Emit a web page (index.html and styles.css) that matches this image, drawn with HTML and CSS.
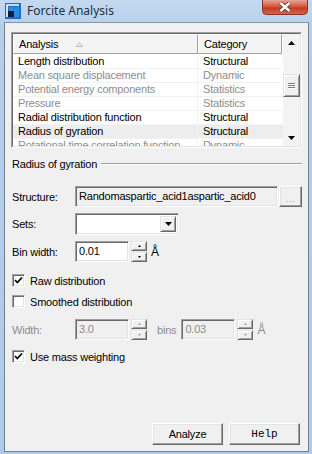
FILE: index.html
```html
<!DOCTYPE html>
<html lang="en">
<head>
    <meta charset="UTF-8">
    <meta name="viewport" content="width=device-width, initial-scale=1.0">
    <title>Forcite Analysis</title>
    <link rel="stylesheet" href="styles.css">
</head>
<body>
    <div class="window">
        <div class="titlebar">
            <svg class="app-icon" width="16" height="16" viewBox="0 0 16 16">
                <rect x="0" y="0" width="16" height="16" fill="#1d6fc4"/>
                <path d="M2 14 V2 H14" fill="none" stroke="#fff" stroke-width="1.6"/>
                <rect x="4" y="4" width="10" height="10" fill="#2f8ae0"/>
                <rect x="3" y="8" width="6" height="6" fill="#0c1d3a"/>
            </svg>
            <span class="title">Forcite Analysis</span>
            <div class="close">
                <svg width="46" height="15" viewBox="0 0 46 15">
                    <defs>
                        <linearGradient id="red" x1="0" y1="0" x2="0" y2="1">
                            <stop offset="0" stop-color="#e9a596"/>
                            <stop offset="0.45" stop-color="#d4573f"/>
                            <stop offset="0.55" stop-color="#c53b22"/>
                            <stop offset="1" stop-color="#d9674c"/>
                        </linearGradient>
                    </defs>
                    <path d="M0.5 0 V10.5 Q0.5 14.5 4.5 14.5 H41.5 Q45.5 14.5 45.5 10.5 V0" fill="url(#red)" stroke="#8a3428"/>
                    <path d="M18.5 3 L27.5 11 M27.5 3 L18.5 11" stroke="#5b2c2a" stroke-width="4"/>
                    <path d="M18.5 3 L27.5 11 M27.5 3 L18.5 11" stroke="#fff" stroke-width="2.4"/>
                </svg>
            </div>
        </div>

        <div class="client">
            <div class="listview">
                <div class="lv-inner">
                    <div class="lv-table">
                        <div class="lv-header">
                            <div class="hcell col-a">Analysis
                                <svg class="sort" width="7" height="5" viewBox="0 0 7 5"><path d="M0.5 4.5 L3.5 0.5 L6.5 4.5 Z" fill="none" stroke="#b8b8b8"/></svg>
                            </div>
                            <div class="hcell col-c">Category</div>
                        </div>
                        <div class="lv-row"><span class="col-a">Length distribution</span><span class="col-c">Structural</span></div>
                        <div class="lv-row off"><span class="col-a">Mean square displacement</span><span class="col-c">Dynamic</span></div>
                        <div class="lv-row off"><span class="col-a">Potential energy components</span><span class="col-c">Statistics</span></div>
                        <div class="lv-row off"><span class="col-a">Pressure</span><span class="col-c">Statistics</span></div>
                        <div class="lv-row"><span class="col-a">Radial distribution function</span><span class="col-c">Structural</span></div>
                        <div class="lv-row selected"><span class="col-a">Radius of gyration</span><span class="col-c">Structural</span></div>
                        <div class="lv-row off"><span class="col-a">Rotational time correlation function</span><span class="col-c">Dynamic</span></div>
                    </div>
                    <div class="scrollbar">
                        <div class="sb-btn">
                            <svg width="7" height="4" viewBox="0 0 7 4"><path d="M0 4 L3.5 0 L7 4 Z" fill="#000"/></svg>
                        </div>
                        <div class="sb-track">
                            <div class="sb-thumb">
                                <span></span><span></span><span></span>
                            </div>
                        </div>
                        <div class="sb-btn">
                            <svg width="7" height="4" viewBox="0 0 7 4"><path d="M0 0 L3.5 4 L7 0 Z" fill="#000"/></svg>
                        </div>
                    </div>
                </div>
            </div>

            <div class="group-title">
                <span>Radius of gyration</span>
                <div class="rule"></div>
            </div>

            <div class="form-row structure">
                <label class="field-label">Structure:</label>
                <div class="textbox readonly wide">Randomaspartic_acid1aspartic_acid0</div>
                <div class="btn browse">...</div>
            </div>

            <div class="form-row sets">
                <label class="field-label">Sets:</label>
                <div class="combo">
                    <div class="combo-btn">
                        <svg width="7" height="4" viewBox="0 0 7 4"><path d="M0 0 L3.5 4 L7 0 Z" fill="#000"/></svg>
                    </div>
                </div>
            </div>

            <div class="form-row bin">
                <label class="field-label">Bin width:</label>
                <div class="textbox num">0.01</div>
                <div class="spin">
                    <div class="spin-btn"><svg width="3" height="2" viewBox="0 0 3 2"><path d="M0 2 L1.5 0 L3 2 Z" fill="#000"/></svg></div>
                    <div class="spin-btn"><svg width="3" height="2" viewBox="0 0 3 2"><path d="M0 0 L1.5 2 L3 0 Z" fill="#000"/></svg></div>
                </div>
                <span class="unit">Å</span>
            </div>

            <div class="check-row raw">
                <div class="checkbox">
                    <svg width="9" height="9" viewBox="0 0 9 9"><path d="M1 4 L3.3 6.5 L8 1.5" fill="none" stroke="#000" stroke-width="1.8"/></svg>
                </div>
                <span>Raw distribution</span>
            </div>

            <div class="check-row smoothed">
                <div class="checkbox"></div>
                <span>Smoothed distribution</span>
            </div>

            <div class="form-row width disabled">
                <label class="field-label">Width:</label>
                <div class="textbox num readonly">3.0</div>
                <div class="spin">
                    <div class="spin-btn"><svg width="3" height="2" viewBox="0 0 3 2"><path d="M0 2 L1.5 0 L3 2 Z" fill="#a0a0a0"/></svg></div>
                    <div class="spin-btn"><svg width="3" height="2" viewBox="0 0 3 2"><path d="M0 0 L1.5 2 L3 0 Z" fill="#a0a0a0"/></svg></div>
                </div>
                <span class="bins">bins</span>
                <div class="textbox num readonly">0.03</div>
                <div class="spin">
                    <div class="spin-btn"><svg width="3" height="2" viewBox="0 0 3 2"><path d="M0 2 L1.5 0 L3 2 Z" fill="#a0a0a0"/></svg></div>
                    <div class="spin-btn"><svg width="3" height="2" viewBox="0 0 3 2"><path d="M0 0 L1.5 2 L3 0 Z" fill="#a0a0a0"/></svg></div>
                </div>
                <span class="unit">Å</span>
            </div>

            <div class="check-row mass">
                <div class="checkbox">
                    <svg width="9" height="9" viewBox="0 0 9 9"><path d="M1 4 L3.3 6.5 L8 1.5" fill="none" stroke="#000" stroke-width="1.8"/></svg>
                </div>
                <span>Use mass weighting</span>
            </div>

            <div class="footer">
                <div class="btn push">Analyze</div>
                <div class="btn push help">Help</div>
            </div>
        </div>
    </div>
</body>
</html>
```

FILE: styles.css
```css
* {
    margin: 0;
    padding: 0;
    box-sizing: border-box;
}
body {
    width: 312px;
    height: 454px;
    overflow: hidden;
    font-family: "Liberation Sans", Arial, sans-serif;
    font-size: 11px;
    letter-spacing: -0.2px;
    color: #000;
}
.window {
    width: 312px;
    height: 454px;
    background: linear-gradient(#c3d9ef, #b5cfea 30px, #aecbea);
    padding: 0 3px 2px 4px;
    display: flex;
    flex-direction: column;
}

/* title bar */
.titlebar {
    height: 22px;
    display: flex;
    align-items: flex-start;
    position: relative;
}
.app-icon {
    margin: 3px 0 0 1px;
}
.title {
    font-family: "Noto Sans", "Open Sans", sans-serif;
    font-size: 12px;
    letter-spacing: 0;
    color: #1c2f45;
    margin: 2px 0 0 6px;
}
.close {
    position: absolute;
    right: 1px;
    top: 0;
    height: 15px;
}
.close svg {
    display: block;
}

/* dialog area */
.client {
    flex: 1;
    background-color: #f0f0f0;
    border: 1px solid #6f7f94;
    border-top-color: #8497ad;
    padding: 9px 6px 6px 6px;
    display: flex;
    flex-direction: column;
}

/* list view */
.listview {
    height: 116px;
    border: 1px solid;
    border-color: #a0a0a0 #fff #fff #a0a0a0;
}
.lv-inner {
    height: 100%;
    border: 1px solid;
    border-color: #696969 #e3e3e3 #e3e3e3 #696969;
    background-color: #fff;
    display: flex;
    overflow: hidden;
}
.lv-table {
    flex: 1;
    overflow: hidden;
}
.lv-header {
    display: flex;
    height: 20px;
    margin-bottom: 1px;
}
.hcell {
    height: 20px;
    line-height: 18px;
    background-color: #f4f4f4;
    border: 1px solid;
    border-color: #fff #a0a0a0 #a0a0a0 #fff;
    padding-left: 5px;
    white-space: nowrap;
    display: flex;
    align-items: center;
}
.sort {
    margin-left: 18px;
}
.col-a {
    width: 185px;
    flex: none;
    padding-left: 5px;
    white-space: nowrap;
    overflow: hidden;
}
.col-c {
    width: 84px;
    flex: none;
    padding-left: 5px;
    white-space: nowrap;
}
.lv-row {
    display: flex;
    height: 14px;
    line-height: 13px;
    border-bottom: 1px solid #f2f2f2;
}
.lv-row .col-a {
    border-right: 1px solid #f2f2f2;
}
.lv-row.off {
    color: #8d8d8d;
}
.lv-row.selected {
    background-color: #ededed;
}

/* scroll bar */
.scrollbar {
    width: 17px;
    display: flex;
    flex-direction: column;
    background-color: #f3f3f3;
}
.sb-btn {
    height: 17px;
    display: flex;
    align-items: center;
    justify-content: center;
}
.sb-track {
    flex: 1;
    padding-top: 23px;
}
.sb-thumb {
    height: 23px;
    border: 1px solid;
    border-color: #e3e3e3 #696969 #696969 #e3e3e3;
    background-color: #f0f0f0;
    box-shadow: inset 1px 1px 0 #fff, inset -1px -1px 0 #a0a0a0;
    display: flex;
    flex-direction: column;
    align-items: center;
    justify-content: center;
    gap: 1px;
}
.sb-thumb span {
    width: 7px;
    height: 1px;
    background-color: #7a7a7a;
    box-shadow: 0 1px 0 #fff;
}

/* group heading */
.group-title {
    display: flex;
    align-items: center;
    margin-top: 9px;
    height: 13px;
    padding-left: 1px;
}
.rule {
    flex: 1;
    height: 2px;
    margin-left: 4px;
    border-top: 1px solid #a0a0a0;
    border-bottom: 1px solid #fff;
}

/* form rows */
.form-row {
    display: flex;
    align-items: center;
    height: 21px;
}
.field-label {
    width: 64px;
    padding-left: 1px;
    flex: none;
}
.structure {
    margin-top: 16px;
}
.sets {
    margin-top: 6px;
    height: 22px;
}
.bin {
    margin-top: 6px;
}
.textbox {
    height: 21px;
    line-height: 19px;
    padding-left: 3px;
    border: 1px solid;
    border-color: #a0a0a0 #fff #fff #a0a0a0;
    box-shadow: inset 1px 1px 0 #696969, inset -1px -1px 0 #e3e3e3;
    background-color: #fff;
    white-space: nowrap;
    overflow: hidden;
}
.textbox.readonly {
    background-color: #f0f0f0;
}
.textbox.wide {
    width: 203px;
}
.textbox.num {
    width: 54px;
}
.btn {
    background-color: #f0f0f0;
    border: 1px solid;
    border-color: #fff #696969 #696969 #fff;
    box-shadow: inset -1px -1px 0 #a0a0a0, inset 1px 1px 0 #e3e3e3;
    display: flex;
    align-items: center;
    justify-content: center;
}
.browse {
    width: 23px;
    height: 21px;
    margin-left: 1px;
    color: #a0a0a0;
    font-size: 9px;
    padding-top: 4px;
    letter-spacing: 0.5px;
}
.combo {
    width: 104px;
    height: 22px;
    border: 1px solid;
    border-color: #a0a0a0 #fff #fff #a0a0a0;
    box-shadow: inset 1px 1px 0 #696969, inset -1px -1px 0 #e3e3e3;
    background-color: #fff;
    display: flex;
    justify-content: flex-end;
    padding: 2px;
}
.combo-btn {
    width: 16px;
    height: 16px;
    background-color: #f0f0f0;
    border: 1px solid;
    border-color: #e3e3e3 #696969 #696969 #e3e3e3;
    box-shadow: inset 1px 1px 0 #fff, inset -1px -1px 0 #a0a0a0;
    display: flex;
    align-items: center;
    justify-content: center;
}
.spin {
    width: 16px;
    height: 21px;
    margin-left: 2px;
    display: flex;
    flex-direction: column;
    justify-content: space-between;
}
.spin-btn {
    height: 10px;
    background-color: #f0f0f0;
    border: 1px solid;
    border-color: #e3e3e3 #696969 #696969 #e3e3e3;
    box-shadow: inset 1px 1px 0 #fff, inset -1px -1px 0 #a0a0a0;
    display: flex;
    align-items: center;
    justify-content: center;
}
.unit {
    margin-left: 4px;
    font-size: 12px;
}
.disabled {
    color: #8d8d8d;
}
.bins {
    margin: 0 5px 0 10px;
}
.width {
    margin-top: 11px;
}

/* check boxes */
.check-row {
    display: flex;
    align-items: center;
    height: 13px;
    padding-left: 1px;
}
.check-row span {
    margin-left: 5px;
}
.checkbox {
    width: 13px;
    height: 13px;
    background-color: #fff;
    border: 1px solid;
    border-color: #a0a0a0 #fff #fff #a0a0a0;
    box-shadow: inset 1px 1px 0 #696969, inset -1px -1px 0 #e3e3e3;
    display: flex;
    align-items: center;
    justify-content: center;
}
.raw {
    margin-top: 12px;
}
.smoothed {
    margin-top: 8px;
}
.mass {
    margin-top: 10px;
}

/* buttons */
.footer {
    margin-top: auto;
    display: flex;
    justify-content: flex-end;
    gap: 6px;
    padding-right: 2px;
}
.push {
    width: 71px;
    height: 22px;
}
.help {
    font-family: "Liberation Mono", "DejaVu Sans Mono", monospace;
    letter-spacing: 0;
}
```
